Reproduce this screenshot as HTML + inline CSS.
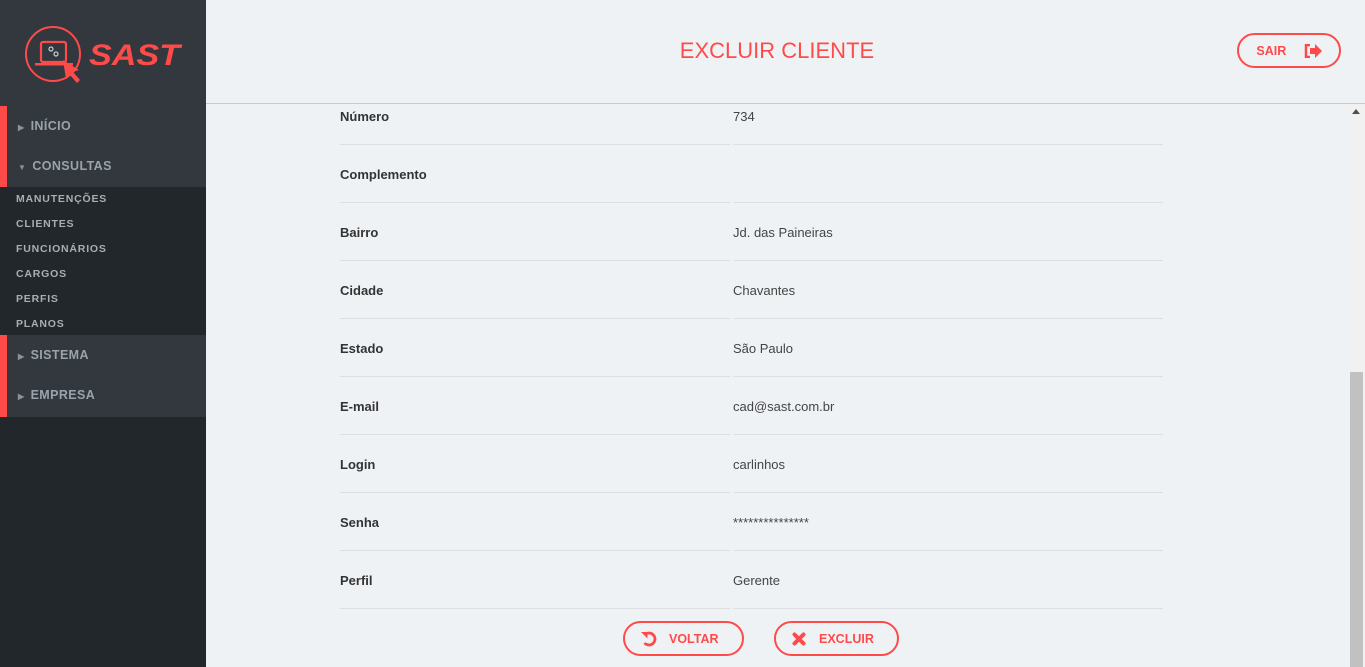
<!DOCTYPE html>
<html><head><meta charset="utf-8"><style>
*{margin:0;padding:0;box-sizing:border-box}
body{width:1365px;height:667px;overflow:hidden;font-family:"Liberation Sans",sans-serif;background:#eff2f5;position:relative}
.side{position:absolute;left:0;top:0;width:206px;height:667px;background:#22272b}
.top{position:absolute;left:0;top:0;width:206px;height:106px;background:#32383e}
.m{position:absolute;left:0;width:206px;background:#32383e;border-left:7px solid #ff4a4a}
.mi{height:40px;line-height:40px;color:#9aa3ab;font-weight:bold;font-size:12.5px;padding-left:11px;letter-spacing:.4px}
.mi span{font-size:8px;margin-right:6px;color:#8a9299}
.sub{position:absolute;left:16px;color:#a9aeb3;font-weight:bold;font-size:10.5px;letter-spacing:.8px}
.hdr{position:absolute;left:206px;top:0;width:1159px;height:104px;border-bottom:1px solid #c8cbce}
.title{position:absolute;left:206px;width:1142px;top:38px;text-align:center;color:#ff4a4a;font-size:22px}
.btn{position:absolute;border:2px solid #ff4a4a;border-radius:18px;color:#ff4a4a;font-weight:bold;font-size:12.5px;display:flex;align-items:center;justify-content:center}
.row{position:absolute;left:340px;width:823px;height:58px;font-size:13px;color:#333}
.row .l{position:absolute;left:0;top:0;font-weight:bold}
.row .v{position:absolute;left:393px;top:0;color:#444}
.line1{position:absolute;left:0;width:390px;height:1px;background:#dcdfe2}
.line2{position:absolute;left:393px;width:430px;height:1px;background:#dcdfe2}
.sb{position:absolute;left:1348px;top:104px;width:17px;height:563px;background:#f1f1f1}
.th{position:absolute;left:1350px;top:372px;width:13px;height:295px;background:#c1c1c1}
</style></head><body>
<div class="side"></div>
<div class="top">
<svg width="206" height="106" style="position:absolute;left:0;top:0">
<circle cx="53" cy="54" r="27" fill="none" stroke="#ff4a4a" stroke-width="2"/>
<rect x="41" y="42" width="25" height="20" rx="2" fill="none" stroke="#ff4a4a" stroke-width="2.2"/>
<circle cx="51" cy="49" r="2" fill="none" stroke="#ccc" stroke-width="1.2"/>
<circle cx="56" cy="54" r="2" fill="none" stroke="#ccc" stroke-width="1.2"/>
<rect x="35" y="63" width="38" height="2.5" fill="#ff4a4a"/>
<path d="M63 60 L79 70 L73 72 L80 80 L77 83 L70 75 L66 79 Z" fill="#ff4a4a"/>
<text x="89" y="65" font-family="Liberation Sans" font-weight="bold" font-style="italic" font-size="30" fill="#ff4a4a" textLength="91" lengthAdjust="spacingAndGlyphs">SAST</text>
</svg></div>
<div class="m" style="top:106px;height:81px"><div class="mi"><span>▶</span>INÍCIO</div><div class="mi"><span>▼</span>CONSULTAS</div></div>
<div class="sub" style="top:193px">MANUTENÇÕES</div>
<div class="sub" style="top:218px">CLIENTES</div>
<div class="sub" style="top:243px">FUNCIONÁRIOS</div>
<div class="sub" style="top:268px">CARGOS</div>
<div class="sub" style="top:293px">PERFIS</div>
<div class="sub" style="top:318px">PLANOS</div>
<div class="m" style="top:335px;height:82px"><div class="mi"><span>▶</span>SISTEMA</div><div class="mi"><span>▶</span>EMPRESA</div></div>
<div class="hdr"></div>
<div class="title">EXCLUIR CLIENTE</div>
<div class="btn" style="left:1237px;top:33px;width:104px;height:35px">SAIR&nbsp;&nbsp;&nbsp;&nbsp;&nbsp;<svg width="18" height="14" viewBox="0 0 18 14"><path d="M6 1H2v12h4" fill="none" stroke="#ff4a4a" stroke-width="2.5"/><path d="M6 4h5V0l7 7-7 7V10H6z" fill="#ff4a4a"/></svg></div>
<div class="row" style="top:109px"><div class="l">Número</div><div class="v">734</div></div>
<div class="row" style="top:167px"><div class="l">Complemento</div><div class="v"></div></div>
<div class="row" style="top:225px"><div class="l">Bairro</div><div class="v">Jd. das Paineiras</div></div>
<div class="row" style="top:283px"><div class="l">Cidade</div><div class="v">Chavantes</div></div>
<div class="row" style="top:341px"><div class="l">Estado</div><div class="v">São Paulo</div></div>
<div class="row" style="top:399px"><div class="l">E-mail</div><div class="v">cad@sast.com.br</div></div>
<div class="row" style="top:457px"><div class="l">Login</div><div class="v">carlinhos</div></div>
<div class="row" style="top:515px"><div class="l">Senha</div><div class="v">***************</div></div>
<div class="row" style="top:573px"><div class="l">Perfil</div><div class="v">Gerente</div></div>
<div style="position:absolute;left:340px;top:0">
<div class="line1" style="top:144px"></div><div class="line2" style="top:144px"></div>
<div class="line1" style="top:202px"></div><div class="line2" style="top:202px"></div>
<div class="line1" style="top:260px"></div><div class="line2" style="top:260px"></div>
<div class="line1" style="top:318px"></div><div class="line2" style="top:318px"></div>
<div class="line1" style="top:376px"></div><div class="line2" style="top:376px"></div>
<div class="line1" style="top:434px"></div><div class="line2" style="top:434px"></div>
<div class="line1" style="top:492px"></div><div class="line2" style="top:492px"></div>
<div class="line1" style="top:550px"></div><div class="line2" style="top:550px"></div>
<div class="line1" style="top:608px"></div><div class="line2" style="top:608px"></div>
</div>
<div class="btn" style="left:623px;top:621px;width:121px;height:35px;justify-content:flex-start;padding-left:16px"><svg width="16" height="16" viewBox="0 0 16 16" style="margin-right:12px"><path d="M3.5 4A6 6 0 1 1 3.5 12" fill="none" stroke="#ff4a4a" stroke-width="2.8"/><path d="M0 1h6.5v6.5z" fill="#ff4a4a"/></svg>VOLTAR</div>
<div class="btn" style="left:774px;top:621px;width:125px;height:35px;justify-content:flex-start;padding-left:16px"><svg width="14" height="14" viewBox="0 0 14 14" style="margin-right:13px"><path d="M2.5 2.5L11.5 11.5M11.5 2.5L2.5 11.5" stroke="#ff4a4a" stroke-width="4" stroke-linecap="round"/></svg>EXCLUIR</div>
<div class="sb"></div><div class="th"></div>
<div style="position:absolute;left:1352px;top:109px;width:0;height:0;border-left:4px solid transparent;border-right:4px solid transparent;border-bottom:5px solid #505050"></div>
</body></html>
